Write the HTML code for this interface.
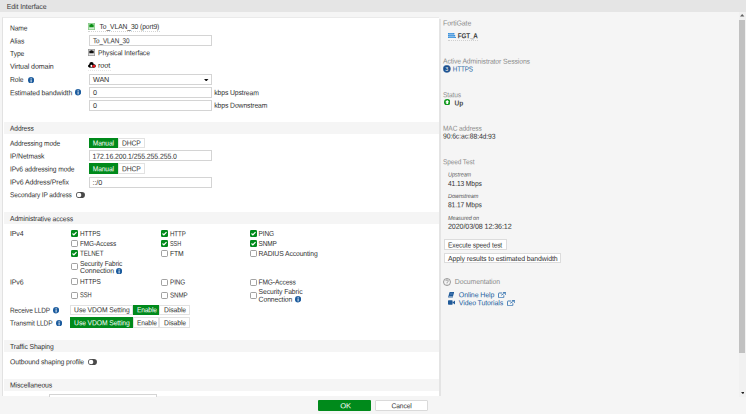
<!DOCTYPE html>
<html><head><meta charset="utf-8"><style>
html,body{margin:0;padding:0;width:746px;height:414px;overflow:hidden;background:#f5f5f5;}
body{position:relative;font-family:"Liberation Sans",sans-serif;font-size:7.2px;line-height:8px;}
.t{position:absolute;white-space:nowrap;letter-spacing:-0.1px;transform-origin:0 0;}
.r{position:absolute;}
svg.r{display:block;}
</style></head><body>
<div class="r" style="left:0px;top:0px;width:746.00px;height:12.00px;background:#e5e5e5"></div>
<div class="t" style="left:6px;top:2px;color:#3a3a3a;transform:translate(0.800px,0.900px) skewY(0.05deg) scaleX(0.9684);">Edit Interface</div>
<div class="r" style="left:2px;top:16.8px;width:437.30px;height:379.70px;background:#fff;border-left:1.5px solid #e2e2e2;border-top:1.8px solid #eaeaea;box-sizing:border-box"></div>
<div class="t" style="left:10px;top:24px;color:#303030;transform:translate(0.000px,0.600px) skewY(0.05deg) scaleX(0.9316);">Name</div>
<div class="t" style="left:10px;top:37px;color:#303030;transform:translate(0.000px,0.500px) skewY(0.05deg) scaleX(0.9400);">Alias</div>
<div class="t" style="left:10px;top:50px;color:#303030;transform:translate(0.000px,0.100px) skewY(0.05deg) scaleX(0.9400);">Type</div>
<div class="t" style="left:10px;top:62px;color:#303030;transform:translate(0.000px,0.800px) skewY(0.05deg) scaleX(0.9841);">Virtual domain</div>
<div class="t" style="left:10px;top:75px;color:#303030;transform:translate(0.000px,0.900px) skewY(0.05deg) scaleX(0.9357);">Role</div>
<div class="t" style="left:10px;top:89px;color:#303030;transform:translate(0.000px,0.200px) skewY(0.05deg) scaleX(0.9585);">Estimated bandwidth</div>
<svg class="r" style="left:88px;top:23px" width="7" height="7" viewBox="0 0 7 7"><rect x="0.4" y="0.4" width="6.2" height="6.2" fill="#cfeccf" stroke="#86c986" stroke-width="0.8"/><path d="M1.3 1.6 H2.6 V1 H4.4 V1.6 H5.7 V4.2 H1.3 Z" fill="#0a8f14"/></svg>
<div class="t" style="left:99px;top:22px;color:#303030;transform:translate(0.500px,0.900px) skewY(0.05deg) scaleX(0.9370);">To_VLAN_30 (port9)</div>
<div class="r" style="left:88px;top:29.6px;width:72.00px;height:1.00px;border-bottom:1px dotted #d4d4d4"></div>
<div class="r" style="left:89px;top:35px;width:123.00px;height:11.00px;border:1px solid #d4d4d4;box-sizing:border-box;background:#fff"></div>
<div class="t" style="left:93px;top:37px;color:#303030;transform:translate(0.000px,0.200px) skewY(0.05deg) scaleX(0.8810);">To_VLAN_30</div>
<svg class="r" style="left:88.3px;top:49px" width="7" height="7" viewBox="0 0 7 7"><rect x="0.4" y="0.4" width="6.2" height="6.2" fill="#e2e2e2" stroke="#9a9a9a" stroke-width="0.8"/><path d="M1.3 1.8 H2.6 V1.2 H4.4 V1.8 H5.7 V4.2 H1.3 Z" fill="#111"/></svg>
<div class="t" style="left:98px;top:49px;color:#303030;transform:translate(0.000px,0.200px) skewY(0.05deg) scaleX(0.9436);">Physical Interface</div>
<svg class="r" style="left:88.2px;top:62.2px" width="7.8" height="5.8" viewBox="0 0 7.8 5.8"><g fill="#000"><circle cx="1.5" cy="4.1" r="1.5"/><circle cx="3.5" cy="2.3" r="2.2"/><circle cx="6.1" cy="3.9" r="1.7"/><rect x="1.5" y="3.4" width="4.6" height="2.2"/></g><circle cx="3.4" cy="3.9" r="1.05" fill="#fff"/><circle cx="5.9" cy="4.2" r="1.45" fill="#e8151b"/></svg>
<div class="t" style="left:98px;top:61px;color:#303030;transform:translate(0.000px,0.700px) skewY(0.05deg) scaleX(1.0167);">root</div>
<div class="r" style="left:88px;top:68.8px;width:23.00px;height:1.00px;border-bottom:1px dotted #e6e6e6"></div>
<svg class="r" style="left:28px;top:76.5px" width="6.2" height="6.4" viewBox="0 0 6.2 6.4"><ellipse cx="3.1" cy="3.2" rx="3.1" ry="3.2" fill="#1c5c9e"/><rect x="2.65" y="2.4" width="0.9" height="3.0" fill="#fff"/><rect x="2.65" y="0.9" width="0.9" height="0.9" fill="#fff"/></svg>
<svg class="r" style="left:75px;top:89.30000000000001px" width="6.2" height="6.4" viewBox="0 0 6.2 6.4"><ellipse cx="3.1" cy="3.2" rx="3.1" ry="3.2" fill="#1c5c9e"/><rect x="2.65" y="2.4" width="0.9" height="3.0" fill="#fff"/><rect x="2.65" y="0.9" width="0.9" height="0.9" fill="#fff"/></svg>
<div class="r" style="left:89px;top:74px;width:123.00px;height:11.00px;border:1px solid #d4d4d4;box-sizing:border-box;background:#fff"></div>
<div class="t" style="left:93px;top:76px;color:#303030;transform:translate(0.000px,0.000px) skewY(0.05deg);">WAN</div>
<svg class="r" style="left:204px;top:78.5px" width="4.5" height="2.6" viewBox="0 0 5 3"><path d="M0 0 H5 L2.5 3 Z" fill="#111"/></svg>
<div class="r" style="left:89px;top:87px;width:123.00px;height:11.00px;border:1px solid #d4d4d4;box-sizing:border-box;background:#fff"></div>
<div class="t" style="left:93px;top:89px;color:#303030;transform:translate(0.000px,0.000px) skewY(0.05deg);">0</div>
<div class="t" style="left:214px;top:89px;color:#303030;transform:translate(0.200px,0.100px) skewY(0.05deg) scaleX(0.9487);">kbps Upstream</div>
<div class="r" style="left:89px;top:100px;width:123.00px;height:11.00px;border:1px solid #d4d4d4;box-sizing:border-box;background:#fff"></div>
<div class="t" style="left:93px;top:102px;color:#303030;transform:translate(0.000px,0.000px) skewY(0.05deg);">0</div>
<div class="t" style="left:214px;top:101px;color:#303030;transform:translate(0.200px,0.800px) skewY(0.05deg) scaleX(0.9498);">kbps Downstream</div>
<div class="r" style="left:3.5px;top:122px;width:435.00px;height:12.00px;background:#f5f5f5"></div>
<div class="t" style="left:10px;top:124px;color:#303030;transform:translate(0.000px,0.800px) skewY(0.05deg) scaleX(0.9192);">Address</div>
<div class="t" style="left:10px;top:139px;color:#303030;transform:translate(0.000px,0.700px) skewY(0.05deg) scaleX(0.9218);">Addressing mode</div>
<div class="t" style="left:10px;top:152px;color:#303030;transform:translate(0.000px,0.500px) skewY(0.05deg) scaleX(0.9500);">IP/Netmask</div>
<div class="t" style="left:10px;top:165px;color:#303030;transform:translate(0.000px,0.400px) skewY(0.05deg) scaleX(0.9275);">IPv6 addressing mode</div>
<div class="t" style="left:10px;top:178px;color:#303030;transform:translate(0.000px,0.400px) skewY(0.05deg) scaleX(0.9672);">IPv6 Address/Prefix</div>
<div class="t" style="left:10px;top:191px;color:#303030;transform:translate(0.000px,0.200px) skewY(0.05deg) scaleX(0.9000);">Secondary IP address</div>
<div class="r" style="left:89px;top:137.5px;width:29.00px;height:10.50px;background:#008a1b"></div>
<div class="t" style="left:92px;top:139px;color:#fff;transform:translate(0.700px,0.400px) skewY(0.05deg) scaleX(0.9227);">Manual</div>
<div class="r" style="left:118px;top:137.5px;width:26.50px;height:10.50px;border:1px solid #e2e2e2;box-sizing:border-box;background:#fff"></div>
<div class="t" style="left:122px;top:139px;color:#303030;transform:translate(0.000px,0.400px) skewY(0.05deg) scaleX(0.9400);">DHCP</div>
<div class="r" style="left:89px;top:150px;width:123.00px;height:11.00px;border:1px solid #d4d4d4;box-sizing:border-box;background:#fff"></div>
<div class="t" style="left:92px;top:152px;color:#303030;transform:translate(0.500px,0.800px) skewY(0.05deg) scaleX(0.9657);">172.16.200.1/255.255.255.0</div>
<div class="r" style="left:89px;top:163.3px;width:29.00px;height:10.50px;background:#008a1b"></div>
<div class="t" style="left:92px;top:165px;color:#fff;transform:translate(0.700px,0.200px) skewY(0.05deg) scaleX(0.9227);">Manual</div>
<div class="r" style="left:118px;top:163.3px;width:26.50px;height:10.50px;border:1px solid #e2e2e2;box-sizing:border-box;background:#fff"></div>
<div class="t" style="left:122px;top:165px;color:#303030;transform:translate(0.000px,0.200px) skewY(0.05deg) scaleX(0.9400);">DHCP</div>
<div class="r" style="left:89px;top:176.5px;width:123.00px;height:11.00px;border:1px solid #d4d4d4;box-sizing:border-box;background:#fff"></div>
<div class="t" style="left:92px;top:178px;color:#303030;transform:translate(0.500px,0.900px) skewY(0.05deg) scaleX(1.0105);">::/0</div>
<svg class="r" style="left:76.3px;top:191.8px" width="9" height="6.1" viewBox="0 0 9 6.1"><rect x="0" y="0" width="9" height="6.1" rx="3.05" fill="#4a4a4a"/><circle cx="3.05" cy="3.05" r="2.3" fill="#fff"/></svg>
<div class="r" style="left:3.5px;top:212px;width:435.00px;height:12.00px;background:#f5f5f5"></div>
<div class="t" style="left:10px;top:215px;color:#303030;transform:translate(0.000px,0.100px) skewY(0.05deg) scaleX(0.9338);">Administrative access</div>
<div class="t" style="left:10px;top:230px;color:#303030;transform:translate(0.000px,0.000px) skewY(0.05deg) scaleX(0.9643);">IPv4</div>
<div class="t" style="left:10px;top:278px;color:#303030;transform:translate(0.000px,0.400px) skewY(0.05deg) scaleX(0.9643);">IPv6</div>
<svg class="r" style="left:71px;top:230.2px" width="7" height="7" viewBox="0 0 7 7"><rect x="0" y="0" width="7" height="7" rx="1.2" fill="#008a1b"/><path d="M1.5 3.5 L2.9 4.9 L5.5 2.1" fill="none" stroke="#fff" stroke-width="1.2"/></svg>
<div class="t" style="left:80px;top:230px;color:#303030;transform:translate(0.000px,0.000px) skewY(0.05deg) scaleX(0.8870);">HTTPS</div>
<svg class="r" style="left:161px;top:230.4px" width="7" height="7" viewBox="0 0 7 7"><rect x="0" y="0" width="7" height="7" rx="1.2" fill="#008a1b"/><path d="M1.5 3.5 L2.9 4.9 L5.5 2.1" fill="none" stroke="#fff" stroke-width="1.2"/></svg>
<div class="t" style="left:170px;top:230px;color:#303030;transform:translate(0.000px,0.200px) skewY(0.05deg) scaleX(0.8526);">HTTP</div>
<svg class="r" style="left:249.5px;top:230.3px" width="7" height="7" viewBox="0 0 7 7"><rect x="0" y="0" width="7" height="7" rx="1.2" fill="#008a1b"/><path d="M1.5 3.5 L2.9 4.9 L5.5 2.1" fill="none" stroke="#fff" stroke-width="1.2"/></svg>
<div class="t" style="left:258px;top:230px;color:#303030;transform:translate(0.500px,0.100px) skewY(0.05deg) scaleX(0.9086);">PING</div>
<svg class="r" style="left:71px;top:240.1px" width="7" height="7" viewBox="0 0 7 7"><rect x="0.45" y="0.45" width="6.1" height="6.1" rx="1.2" fill="#fff" stroke="#8a8a8a" stroke-width="0.85"/></svg>
<div class="t" style="left:80px;top:239px;color:#303030;transform:translate(0.000px,0.900px) skewY(0.05deg) scaleX(0.8902);">FMG-Access</div>
<svg class="r" style="left:161px;top:240.2px" width="7" height="7" viewBox="0 0 7 7"><rect x="0" y="0" width="7" height="7" rx="1.2" fill="#008a1b"/><path d="M1.5 3.5 L2.9 4.9 L5.5 2.1" fill="none" stroke="#fff" stroke-width="1.2"/></svg>
<div class="t" style="left:170px;top:240px;color:#303030;transform:translate(0.000px,0.000px) skewY(0.05deg) scaleX(0.7600);">SSH</div>
<svg class="r" style="left:249.5px;top:240.2px" width="7" height="7" viewBox="0 0 7 7"><rect x="0" y="0" width="7" height="7" rx="1.2" fill="#008a1b"/><path d="M1.5 3.5 L2.9 4.9 L5.5 2.1" fill="none" stroke="#fff" stroke-width="1.2"/></svg>
<div class="t" style="left:258px;top:240px;color:#303030;transform:translate(0.500px,0.000px) skewY(0.05deg) scaleX(0.8976);">SNMP</div>
<svg class="r" style="left:71px;top:250px" width="7" height="7" viewBox="0 0 7 7"><rect x="0" y="0" width="7" height="7" rx="1.2" fill="#008a1b"/><path d="M1.5 3.5 L2.9 4.9 L5.5 2.1" fill="none" stroke="#fff" stroke-width="1.2"/></svg>
<div class="t" style="left:80px;top:249px;color:#303030;transform:translate(0.000px,0.800px) skewY(0.05deg) scaleX(0.8667);">TELNET</div>
<svg class="r" style="left:161px;top:250.1px" width="7" height="7" viewBox="0 0 7 7"><rect x="0.45" y="0.45" width="6.1" height="6.1" rx="1.2" fill="#fff" stroke="#8a8a8a" stroke-width="0.85"/></svg>
<div class="t" style="left:170px;top:249px;color:#303030;transform:translate(0.000px,0.900px) skewY(0.05deg) scaleX(0.9429);">FTM</div>
<svg class="r" style="left:249.5px;top:250.1px" width="7" height="7" viewBox="0 0 7 7"><rect x="0.45" y="0.45" width="6.1" height="6.1" rx="1.2" fill="#fff" stroke="#8a8a8a" stroke-width="0.85"/></svg>
<div class="t" style="left:258px;top:249px;color:#303030;transform:translate(0.500px,0.900px) skewY(0.05deg) scaleX(0.9440);">RADIUS Accounting</div>
<svg class="r" style="left:71px;top:263.4px" width="7" height="7" viewBox="0 0 7 7"><rect x="0.45" y="0.45" width="6.1" height="6.1" rx="1.2" fill="#fff" stroke="#8a8a8a" stroke-width="0.85"/></svg>
<div class="t" style="left:80px;top:259px;color:#303030;transform:translate(0.000px,0.900px) skewY(0.05deg) scaleX(0.9106);">Security Fabric</div>
<div class="t" style="left:80px;top:267px;color:#303030;transform:translate(0.000px,0.100px) skewY(0.05deg) scaleX(0.9629);">Connection</div>
<svg class="r" style="left:116px;top:267.59999999999997px" width="6.2" height="6.4" viewBox="0 0 6.2 6.4"><ellipse cx="3.1" cy="3.2" rx="3.1" ry="3.2" fill="#1c5c9e"/><rect x="2.65" y="2.4" width="0.9" height="3.0" fill="#fff"/><rect x="2.65" y="0.9" width="0.9" height="0.9" fill="#fff"/></svg>
<svg class="r" style="left:71px;top:278.3px" width="7" height="7" viewBox="0 0 7 7"><rect x="0.45" y="0.45" width="6.1" height="6.1" rx="1.2" fill="#fff" stroke="#8a8a8a" stroke-width="0.85"/></svg>
<div class="t" style="left:80px;top:278px;color:#303030;transform:translate(0.000px,0.100px) skewY(0.05deg) scaleX(0.8957);">HTTPS</div>
<svg class="r" style="left:161px;top:278.6px" width="7" height="7" viewBox="0 0 7 7"><rect x="0.45" y="0.45" width="6.1" height="6.1" rx="1.2" fill="#fff" stroke="#8a8a8a" stroke-width="0.85"/></svg>
<div class="t" style="left:170px;top:278px;color:#303030;transform:translate(0.000px,0.400px) skewY(0.05deg) scaleX(0.8824);">PING</div>
<svg class="r" style="left:249.5px;top:278.6px" width="7" height="7" viewBox="0 0 7 7"><rect x="0.45" y="0.45" width="6.1" height="6.1" rx="1.2" fill="#fff" stroke="#8a8a8a" stroke-width="0.85"/></svg>
<div class="t" style="left:258px;top:278px;color:#303030;transform:translate(0.500px,0.400px) skewY(0.05deg) scaleX(0.9160);">FMG-Access</div>
<svg class="r" style="left:71px;top:291.5px" width="7" height="7" viewBox="0 0 7 7"><rect x="0.45" y="0.45" width="6.1" height="6.1" rx="1.2" fill="#fff" stroke="#8a8a8a" stroke-width="0.85"/></svg>
<div class="t" style="left:80px;top:291px;color:#303030;transform:translate(0.000px,0.300px) skewY(0.05deg) scaleX(0.7933);">SSH</div>
<svg class="r" style="left:161px;top:291.6px" width="7" height="7" viewBox="0 0 7 7"><rect x="0.45" y="0.45" width="6.1" height="6.1" rx="1.2" fill="#fff" stroke="#8a8a8a" stroke-width="0.85"/></svg>
<div class="t" style="left:170px;top:291px;color:#303030;transform:translate(0.000px,0.400px) skewY(0.05deg) scaleX(0.8571);">SNMP</div>
<svg class="r" style="left:249.5px;top:291.7px" width="7" height="7" viewBox="0 0 7 7"><rect x="0.45" y="0.45" width="6.1" height="6.1" rx="1.2" fill="#fff" stroke="#8a8a8a" stroke-width="0.85"/></svg>
<div class="t" style="left:258px;top:288px;color:#303030;transform:translate(0.600px,0.000px) skewY(0.05deg) scaleX(0.9440);">Security Fabric</div>
<div class="t" style="left:258px;top:295px;color:#303030;transform:translate(0.600px,0.700px) skewY(0.05deg) scaleX(0.9520);">Connection</div>
<svg class="r" style="left:295px;top:296.4px" width="6.2" height="6.4" viewBox="0 0 6.2 6.4"><ellipse cx="3.1" cy="3.2" rx="3.1" ry="3.2" fill="#1c5c9e"/><rect x="2.65" y="2.4" width="0.9" height="3.0" fill="#fff"/><rect x="2.65" y="0.9" width="0.9" height="0.9" fill="#fff"/></svg>
<div class="t" style="left:10px;top:306px;color:#303030;transform:translate(0.000px,0.700px) skewY(0.05deg) scaleX(0.8956);">Receive LLDP</div>
<svg class="r" style="left:53px;top:307.2px" width="6.2" height="6.4" viewBox="0 0 6.2 6.4"><ellipse cx="3.1" cy="3.2" rx="3.1" ry="3.2" fill="#1c5c9e"/><rect x="2.65" y="2.4" width="0.9" height="3.0" fill="#fff"/><rect x="2.65" y="0.9" width="0.9" height="0.9" fill="#fff"/></svg>
<div class="t" style="left:10px;top:319px;color:#303030;transform:translate(0.000px,0.400px) skewY(0.05deg) scaleX(0.9191);">Transmit LLDP</div>
<svg class="r" style="left:55.5px;top:319.9px" width="6.2" height="6.4" viewBox="0 0 6.2 6.4"><ellipse cx="3.1" cy="3.2" rx="3.1" ry="3.2" fill="#1c5c9e"/><rect x="2.65" y="2.4" width="0.9" height="3.0" fill="#fff"/><rect x="2.65" y="0.9" width="0.9" height="0.9" fill="#fff"/></svg>
<div class="r" style="left:70.3px;top:304.5px;width:62.50px;height:10.50px;border:1px solid #e2e2e2;box-sizing:border-box;background:#fff"></div>
<div class="t" style="left:74px;top:306px;color:#303030;transform:translate(0.100px,0.200px) skewY(0.05deg) scaleX(0.9389);">Use VDOM Setting</div>
<div class="r" style="left:132.8px;top:304.5px;width:26.60px;height:10.50px;background:#008a1b"></div>
<div class="t" style="left:136px;top:306px;color:#fff;transform:translate(0.900px,0.200px) skewY(0.05deg) scaleX(0.9186);">Enable</div>
<div class="r" style="left:159.4px;top:304.5px;width:30.40px;height:10.50px;border:1px solid #e2e2e2;box-sizing:border-box;background:#fff"></div>
<div class="t" style="left:164px;top:306px;color:#303030;transform:translate(0.100px,0.200px) skewY(0.05deg) scaleX(0.9432);">Disable</div>
<div class="r" style="left:70.3px;top:317.3px;width:62.50px;height:10.50px;background:#008a1b"></div>
<div class="t" style="left:74px;top:319px;color:#fff;transform:translate(0.100px,0.300px) skewY(0.05deg) scaleX(0.9389);">Use VDOM Setting</div>
<div class="r" style="left:132.8px;top:317.3px;width:26.60px;height:10.50px;border:1px solid #e2e2e2;box-sizing:border-box;background:#fff"></div>
<div class="t" style="left:136px;top:319px;color:#303030;transform:translate(0.900px,0.300px) skewY(0.05deg) scaleX(0.9186);">Enable</div>
<div class="r" style="left:159.4px;top:317.3px;width:30.40px;height:10.50px;border:1px solid #e2e2e2;box-sizing:border-box;background:#fff"></div>
<div class="t" style="left:164px;top:319px;color:#303030;transform:translate(0.100px,0.300px) skewY(0.05deg) scaleX(0.9432);">Disable</div>
<div class="r" style="left:3.5px;top:340px;width:435.00px;height:12.00px;background:#f5f5f5"></div>
<div class="t" style="left:10px;top:343px;color:#303030;transform:translate(0.000px,0.000px) skewY(0.05deg) scaleX(0.9391);">Traffic Shaping</div>
<div class="t" style="left:10px;top:358px;color:#303030;transform:translate(0.000px,0.200px) skewY(0.05deg) scaleX(0.9500);">Outbound shaping profile</div>
<svg class="r" style="left:87.9px;top:358.6px" width="9" height="6.1" viewBox="0 0 9 6.1"><rect x="0" y="0" width="9" height="6.1" rx="3.05" fill="#4a4a4a"/><circle cx="3.05" cy="3.05" r="2.3" fill="#fff"/></svg>
<div class="r" style="left:3.5px;top:378.7px;width:435.00px;height:12.00px;background:#f5f5f5"></div>
<div class="t" style="left:10px;top:381px;color:#303030;transform:translate(0.000px,0.500px) skewY(0.05deg) scaleX(0.9523);">Miscellaneous</div>
<div class="r" style="left:49px;top:394px;width:108.00px;height:3.00px;border:1px solid #d4d4d4;border-bottom:none;box-sizing:border-box;background:#fff"></div>
<div class="r" style="left:439.3px;top:18.6px;width:1.30px;height:377.90px;background:#e4e4e4"></div>
<div class="t" style="left:443px;top:19px;color:#8c8c8c;transform:translate(0.000px,0.400px) skewY(0.05deg) scaleX(0.9724);">FortiGate</div>
<svg class="r" style="left:448px;top:32.8px" width="8" height="5.6" viewBox="0 0 8 5.6"><g fill="#3d92dc"><rect x="0" y="0" width="6.4" height="1.6"/><rect x="0" y="2.0" width="7.2" height="1.6"/><rect x="0" y="4.0" width="8" height="1.6"/></g><path d="M1 0.8 H5 M1 2.8 H5.8 M1 4.8 H6.6" stroke="#9cc8f0" stroke-width="0.35"/></svg>
<div class="t" style="left:457px;top:32px;color:#3a3a3a;font-weight:bold;transform:translate(0.700px,0.200px) skewY(0.05deg) scaleX(0.8712);">FGT_A</div>
<div class="r" style="left:447.5px;top:39.3px;width:30.50px;height:1.00px;border-bottom:1px dotted #d0d0d0"></div>
<div class="t" style="left:443px;top:57px;color:#8c8c8c;transform:translate(0.000px,0.600px) skewY(0.05deg) scaleX(0.9467);">Active Administrator Sessions</div>
<svg class="r" style="left:443px;top:65.3px" width="7.7" height="7.7" viewBox="0 0 8 8"><circle cx="4" cy="4" r="3.8" fill="#1d4f8c" stroke="#3b6ea8" stroke-width="0.5"/><text x="4" y="6.1" font-size="5.6" text-anchor="middle" fill="#fff" font-family="Liberation Sans">3</text></svg>
<div class="t" style="left:452px;top:65px;color:#225f9e;transform:translate(0.800px,0.500px) skewY(0.05deg) scaleX(0.8707);">HTTPS</div>
<div class="t" style="left:443px;top:91px;color:#8c8c8c;transform:translate(0.000px,0.200px) skewY(0.05deg) scaleX(0.9100);">Status</div>
<svg class="r" style="left:443.7px;top:99.1px" width="6.4" height="6.4" viewBox="0 0 6.4 6.4"><circle cx="3.2" cy="3.2" r="3.2" fill="#139a1f"/><path d="M3.2 1.1 L5.3 3.3 H4.1 V5.1 H2.3 V3.3 H1.1 Z" fill="#fff"/></svg>
<div class="t" style="left:454px;top:99px;color:#4a4a4a;font-weight:bold;transform:translate(0.600px,0.500px) skewY(0.05deg) scaleX(0.9149);">Up</div>
<div class="t" style="left:443px;top:124px;color:#8c8c8c;transform:translate(0.000px,0.700px) skewY(0.05deg) scaleX(0.9116);">MAC address</div>
<div class="t" style="left:443px;top:132px;color:#333;transform:translate(0.000px,0.600px) skewY(0.05deg) scaleX(0.9464);">90:6c:ac:88:4d:93</div>
<div class="t" style="left:443px;top:158px;color:#8c8c8c;transform:translate(0.000px,0.300px) skewY(0.05deg) scaleX(0.9000);">Speed Test</div>
<div class="t" style="left:448px;top:170px;color:#555;font-style:italic;font-size:6.0px;transform:translate(0.000px,0.600px) skewY(0.05deg) scaleX(0.9160);">Upstream</div>
<div class="t" style="left:448px;top:179px;color:#333;transform:translate(0.000px,0.900px) skewY(0.05deg) scaleX(0.9216);">41.13 Mbps</div>
<div class="t" style="left:448px;top:192px;color:#555;font-style:italic;font-size:6.0px;transform:translate(0.000px,0.000px) skewY(0.05deg) scaleX(0.9303);">Downstream</div>
<div class="t" style="left:448px;top:201px;color:#333;transform:translate(0.000px,0.200px) skewY(0.05deg) scaleX(0.9216);">81.17 Mbps</div>
<div class="t" style="left:448px;top:213px;color:#555;font-style:italic;font-size:6.0px;transform:translate(0.000px,0.900px) skewY(0.05deg) scaleX(0.9118);">Measured on</div>
<div class="t" style="left:448px;top:222px;color:#333;transform:translate(0.000px,0.800px) skewY(0.05deg) scaleX(0.9922);">2020/03/08 12:36:12</div>
<div class="r" style="left:444.2px;top:239.3px;width:62.80px;height:10.70px;border:1px solid #dcdcdc;box-sizing:border-box;background:#fff"></div>
<div class="t" style="left:448px;top:241px;color:#333;transform:translate(0.000px,0.400px) skewY(0.05deg) scaleX(0.9117);">Execute speed test</div>
<div class="r" style="left:444.2px;top:252.6px;width:116.80px;height:10.80px;border:1px solid #dcdcdc;box-sizing:border-box;background:#fff"></div>
<div class="t" style="left:448px;top:254px;color:#333;transform:translate(0.000px,0.900px) skewY(0.05deg) scaleX(0.9655);">Apply results to estimated bandwidth</div>
<svg class="r" style="left:442.9px;top:278.4px" width="8" height="8" viewBox="0 0 8 8"><circle cx="4" cy="4" r="3.5" fill="none" stroke="#7a7a7a" stroke-width="0.75"/><path d="M2.8 3.1 A1.2 1.2 0 1 1 4.4 4.2 Q4 4.4 4 5" fill="none" stroke="#7a7a7a" stroke-width="0.7"/><rect x="3.65" y="5.6" width="0.7" height="0.7" fill="#7a7a7a"/></svg>
<div class="t" style="left:454px;top:278px;color:#8c8c8c;transform:translate(0.800px,0.000px) skewY(0.05deg) scaleX(0.9619);">Documentation</div>
<svg class="r" style="left:448.3px;top:292px" width="6.2" height="5.5" viewBox="0 0 6.2 5.5"><path d="M1.6 0 H6.2 L5 4.3 H0.4 Z" fill="#1f5a99"/><path d="M0.4 4.3 H5 L4.8 5.5 H0.3 Q-0.1 4.9 0.4 4.3 Z" fill="#1f5a99"/><path d="M0.9 4.8 H4.6" stroke="#fff" stroke-width="0.4"/><path d="M2.2 1.3 H4.9 M2 2.3 H4.6" stroke="#6f98c8" stroke-width="0.45"/></svg>
<div class="t" style="left:458px;top:291px;color:#225f9e;transform:translate(0.800px,0.200px) skewY(0.05deg) scaleX(0.9724);">Online Help</div>
<svg class="r" style="left:497.8px;top:291.5px" width="8.2" height="6.2" viewBox="0 0 8.2 6.2"><path d="M4.2 1.0 H1.1 Q0.45 1.0 0.45 1.6 V5.1 Q0.45 5.75 1.1 5.75 H5.2 Q5.85 5.75 5.85 5.1 V3.3" fill="none" stroke="#3572b0" stroke-width="0.9"/><path d="M3.2 3.3 L7.2 0.7" fill="none" stroke="#3572b0" stroke-width="0.9"/><path d="M5.0 0.45 H7.75 V3.0" fill="none" stroke="#3572b0" stroke-width="0.9"/></svg>
<svg class="r" style="left:448px;top:300.1px" width="7" height="5" viewBox="0 0 7 5"><rect x="0" y="0.2" width="4.6" height="4.6" rx="0.7" fill="#1f5a99"/><path d="M4.3 2.5 L7 0.4 V4.6 Z" fill="#1f5a99"/></svg>
<div class="t" style="left:458px;top:299px;color:#225f9e;transform:translate(0.800px,0.300px) skewY(0.05deg) scaleX(0.9632);">Video Tutorials</div>
<svg class="r" style="left:507.3px;top:299.6px" width="8.2" height="6.2" viewBox="0 0 8.2 6.2"><path d="M4.2 1.0 H1.1 Q0.45 1.0 0.45 1.6 V5.1 Q0.45 5.75 1.1 5.75 H5.2 Q5.85 5.75 5.85 5.1 V3.3" fill="none" stroke="#3572b0" stroke-width="0.9"/><path d="M3.2 3.3 L7.2 0.7" fill="none" stroke="#3572b0" stroke-width="0.9"/><path d="M5.0 0.45 H7.75 V3.0" fill="none" stroke="#3572b0" stroke-width="0.9"/></svg>
<div class="r" style="left:738.5px;top:12px;width:7.50px;height:385.00px;background:#f1f1f1"></div>
<div class="r" style="left:739.3px;top:20px;width:5.70px;height:333.00px;background:#c1c1c1"></div>
<svg class="r" style="left:740.3px;top:14.2px" width="4.4" height="2.6" viewBox="0 0 5 3"><path d="M0 3 H5 L2.5 0 Z" fill="#606060"/></svg>
<svg class="r" style="left:740.6px;top:391.5px" width="3.8" height="2.2" viewBox="0 0 5 3"><path d="M0 0 H5 L2.5 3 Z" fill="#222"/></svg>
<div class="r" style="left:317.5px;top:400.2px;width:53.70px;height:10.80px;background:#008a1b;border-radius:1px"></div>
<div class="t" style="left:340px;top:402px;color:#fff;transform:translate(0.300px,0.200px) skewY(0.05deg) scaleX(1.0515);">OK</div>
<div class="r" style="left:374.6px;top:400.3px;width:53.80px;height:10.30px;border:1px solid #dadada;border-radius:1px;box-sizing:border-box;background:#fff"></div>
<div class="t" style="left:391px;top:402px;color:#333;transform:translate(0.500px,0.200px) skewY(0.05deg) scaleX(0.9302);">Cancel</div>
</body></html>
